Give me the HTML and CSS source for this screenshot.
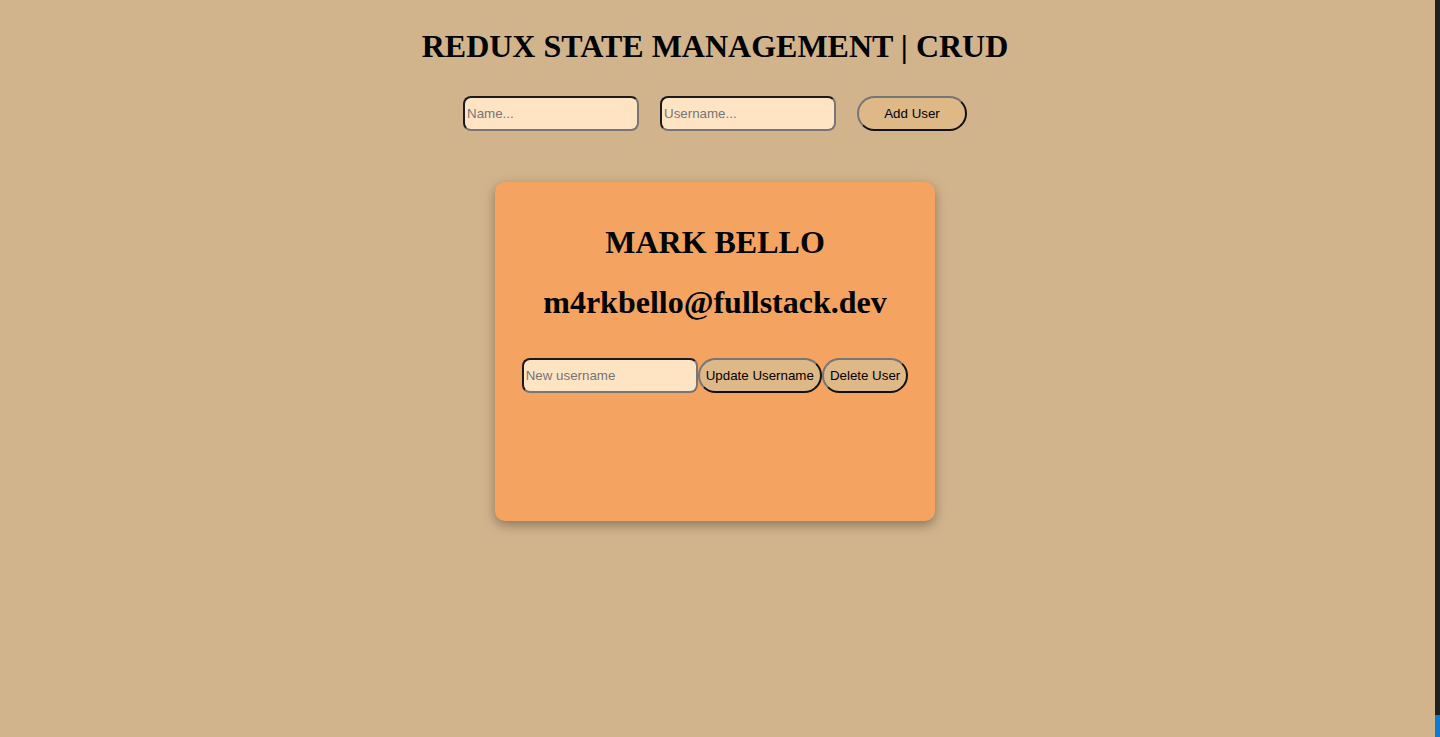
FILE: index.html
```html
<!DOCTYPE html>
<html lang="en">
<head>
<meta charset="utf-8">
<title>Redux CRUD</title>
<link rel="stylesheet" href="styles.css">
</head>
<body>
<div class="page">
  <main class="main">
    <h1 class="title">REDUX STATE MANAGEMENT | CRUD</h1>
    <div class="add-form">
      <input class="field" type="text" placeholder="Name...">
      <input class="field" type="text" placeholder="Username...">
      <button class="btn btn-add" type="button">Add User</button>
    </div>
    <section class="card">
      <h1 class="card-name">MARK BELLO</h1>
      <h1 class="card-email">m4rkbello@fullstack.dev</h1>
      <div class="card-actions">
        <input class="field" type="text" placeholder="New username">
        <button class="btn" type="button">Update Username</button>
        <button class="btn" type="button">Delete User</button>
      </div>
    </section>
  </main>
  <div class="edge">
    <div class="edge-dark"></div>
    <div class="edge-blue"></div>
  </div>
</div>
</body>
</html>
```

FILE: styles.css
```css
html, body {
  margin: 0;
  padding: 0;
  height: 100%;
}

body {
  background: #d2b48c;
  font-family: "Liberation Serif", "Times New Roman", serif;
  color: #000;
}

.page {
  display: flex;
  height: 737px;
  overflow: hidden;
}

.main {
  flex: 1;
  padding-right: 5px;
  display: flex;
  flex-direction: column;
  align-items: center;
}

.title {
  font-size: 32px;
  font-weight: bold;
  margin: 28px 0 0;
  line-height: normal;
}

.add-form {
  display: flex;
  gap: 21px;
  margin-top: 31px;
}

.field {
  box-sizing: border-box;
  width: 176px;
  height: 35px;
  background: #ffe4c4;
  border-width: 2px;
  border-style: solid;
  border-color: #1a1a1a #767676 #767676 #1a1a1a;
  border-radius: 8px;
  padding: 1px 2px;
  font-family: "Liberation Sans", Arial, sans-serif;
  font-size: 13.333px;
  color: #000;
  outline: none;
}

.field::placeholder {
  color: #757575;
}

.btn {
  box-sizing: border-box;
  height: 35px;
  background: #deb887;
  border-width: 2px;
  border-style: solid;
  border-color: #767676 #111 #111 #767676;
  border-radius: 18px;
  padding: 1px 6px;
  font-family: "Liberation Sans", Arial, sans-serif;
  font-size: 13.333px;
  color: #000;
}

.btn-add {
  width: 110px;
}

.card {
  box-sizing: border-box;
  width: 440px;
  height: 339px;
  margin-top: 51px;
  background: #f4a460;
  border-radius: 10px;
  box-shadow: 0 4px 12px rgba(0, 0, 0, 0.35);
  padding-top: 42px;
  display: flex;
  flex-direction: column;
  align-items: center;
}

.card-name,
.card-email {
  font-size: 32px;
  font-weight: bold;
  line-height: normal;
  margin: 0;
}

.card-email {
  margin-top: 22.5px;
}

.card-actions {
  display: flex;
  margin-top: 37px;
}

.edge {
  width: 5px;
  display: flex;
  flex-direction: column;
}

.edge-dark {
  flex: 1;
  background: #1f1f1f;
}

.edge-blue {
  height: 22px;
  background: #0e7ad3;
}
```
